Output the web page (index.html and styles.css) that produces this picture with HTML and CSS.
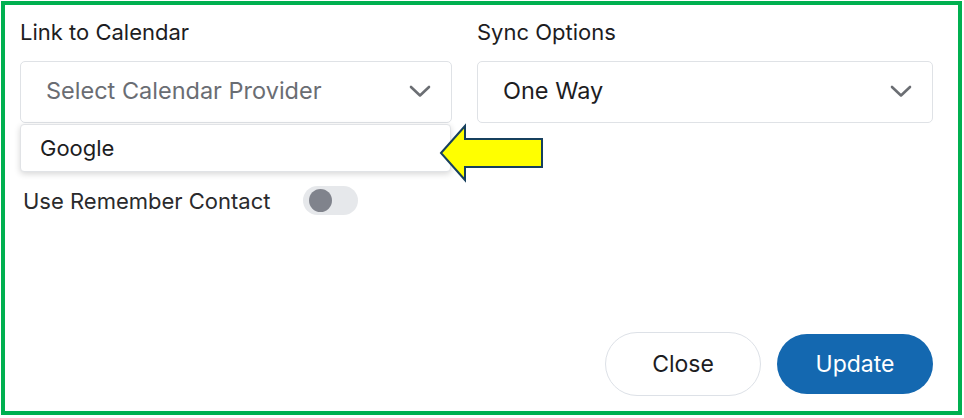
FILE: index.html
```html
<!DOCTYPE html>
<html>
<head>
<meta charset="utf-8">
<link rel="stylesheet" href="styles.css">
</head>
<body>
<div class="frame">
  <div class="fields">
    <div class="field">
      <label class="label">Link to Calendar</label>
      <div class="select-wrap">
        <div class="select placeholder"><span>Select Calendar Provider</span>
          <svg class="chev" width="22" height="13" viewBox="0 0 22 13"><path d="M2 2 L11 10.5 L20 2" fill="none" stroke="#6b6e73" stroke-width="2.6" stroke-linecap="round" stroke-linejoin="round"/></svg>
        </div>
        <ul class="menu"><li>Google</li></ul>
      </div>
    </div>
    <div class="field">
      <label class="label">Sync Options</label>
      <div class="select"><span>One Way</span>
        <svg class="chev" width="22" height="13" viewBox="0 0 22 13"><path d="M2 2 L11 10.5 L20 2" fill="none" stroke="#6b6e73" stroke-width="2.6" stroke-linecap="round" stroke-linejoin="round"/></svg>
      </div>
    </div>
  </div>
  <div class="remember">
    <span class="remember-text">Use Remember Contact</span>
    <span class="toggle"><span class="knob"></span></span>
  </div>
  <div class="actions">
    <button class="btn btn-close">Close</button>
    <button class="btn btn-update">Update</button>
  </div>
  <svg class="arrow" width="112" height="70" viewBox="0 0 112 70"><polygon points="8,36 32,9 32,22 109,22 109,50 32,50 32,63" fill="#ffff00" stroke="#17405e" stroke-width="2" stroke-linejoin="miter"/></svg>
</div>
</body>
</html>
```
FILE: styles.css
```css
* { box-sizing: border-box; }
html, body { margin: 0; padding: 0; background: #fff; }
body { font-family: "Inter", "Open Sans", sans-serif; color: #212121; }
.frame {
  position: relative;
  margin: 1px;
  width: 961px;
  height: 414px;
  border: 4px solid #00b050;
  padding: 14px 25px 15px 15px;
  display: flex;
  flex-direction: column;
}
.fields {
  display: grid;
  grid-template-columns: 432px 456px;
  column-gap: 25px;
}
.field { display: flex; flex-direction: column; }
.label { font-size: 22px; line-height: 26px; color: #1d1d1f; }
.select-wrap { position: relative; }
.select {
  margin-top: 16px;
  height: 62px;
  border: 1px solid #dfe2e6;
  border-radius: 5px;
  display: flex;
  align-items: center;
  justify-content: space-between;
  padding: 0 20px 3px 25px;
  font-size: 23.5px;
  color: #1d1d1f;
}
.select.placeholder { color: #6a6d73; }
.chev { flex: none; margin-top: 1px; }
.menu {
  position: absolute;
  left: 0;
  top: 79px;
  width: 431px;
  height: 48px;
  margin: 0;
  padding: 0 0 0 19px;
  list-style: none;
  background: #fff;
  border: 1px solid #e1e3e6;
  border-radius: 4px;
  box-shadow: 0 2px 6px rgba(0,0,0,0.16);
  display: flex;
  align-items: center;
  font-size: 22px;
  color: #1d1d1f;
}
.remember {
  margin-top: 63px;
  display: flex;
  align-items: center;
  padding-left: 3px;
  height: 29px;
}
.remember-text { font-size: 22px; color: #2a2a2c; width: 280px; }
.toggle {
  width: 55px;
  height: 29px;
  border-radius: 15px;
  background: #e6e8eb;
  display: flex;
  align-items: center;
  padding-left: 6px;
}
.knob { width: 23px; height: 23px; border-radius: 50%; background: #80838c; }
.actions {
  margin-top: auto;
  display: flex;
  justify-content: flex-end;
  align-items: center;
  gap: 16px;
}
.btn {
  font-family: inherit;
  width: 156px;
  border-radius: 32px;
  font-size: 23px;
  cursor: pointer;
}
.btn-close {
  height: 64px;
  background: #fff;
  border: 1px solid #dde1e7;
  color: #1d1d1f;
}
.btn-update {
  height: 60px;
  background: #1468b0;
  border: none;
  color: #fff;
}
.arrow { position: absolute; left: 428px; top: 112px; }
```
